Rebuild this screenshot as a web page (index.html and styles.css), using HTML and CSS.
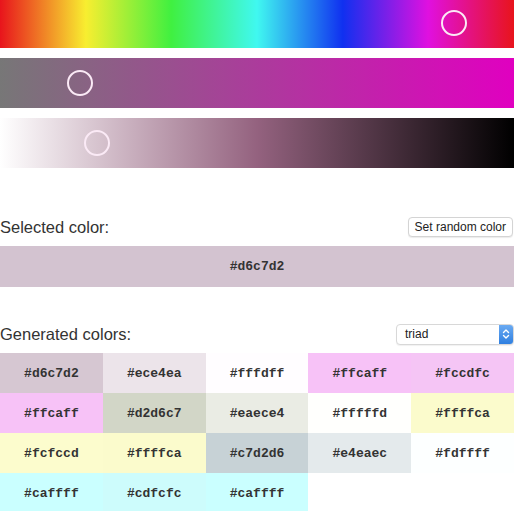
FILE: index.html
```html
<!DOCTYPE html>
<html lang="en">
<head>
    <meta charset="UTF-8">
    <meta name="viewport" content="width=device-width, initial-scale=1.0">
    <title>Color schemes</title>
    <link rel="stylesheet" href="styles.css">
</head>
<body>
    <div class="picker">
        <div class="slider hue"><span class="handle" style="left: 454px"></span></div>
        <div class="slider saturation"><span class="handle" style="left: 80px"></span></div>
        <div class="slider lightness"><span class="handle" style="left: 97px"></span></div>
    </div>

    <section class="selected">
        <div class="section-head">
            <h2>Selected color:</h2>
            <button class="button">Set random color</button>
        </div>
        <div class="current">#d6c7d2</div>
    </section>

    <section class="generated">
        <div class="section-head">
            <h2>Generated colors:</h2>
            <div class="scheme-select">
                <span>triad</span>
                <span class="stepper">
                    <svg width="8" height="12" viewBox="0 0 8 12">
                        <path d="M1.5 4.5 L4 2 L6.5 4.5 M1.5 7.5 L4 10 L6.5 7.5" fill="none" stroke="#fff" stroke-width="1.4" stroke-linecap="round" stroke-linejoin="round"/>
                    </svg>
                </span>
            </div>
        </div>
        <div class="swatches">
            <div class="swatch" style="background: #d6c7d2">#d6c7d2</div>
            <div class="swatch" style="background: #ece4ea">#ece4ea</div>
            <div class="swatch" style="background: #fffdff">#fffdff</div>
            <div class="swatch" style="background: #f7c2f7">#ffcaff</div>
            <div class="swatch" style="background: #f5c5f5">#fccdfc</div>
            <div class="swatch" style="background: #f7c2f7">#ffcaff</div>
            <div class="swatch" style="background: #d2d6c7">#d2d6c7</div>
            <div class="swatch" style="background: #eaece4">#eaece4</div>
            <div class="swatch" style="background: #fffffd">#fffffd</div>
            <div class="swatch" style="background: #fbfbcc">#ffffca</div>
            <div class="swatch" style="background: #fcfccd">#fcfccd</div>
            <div class="swatch" style="background: #fbfbcc">#ffffca</div>
            <div class="swatch" style="background: #c7d2d6">#c7d2d6</div>
            <div class="swatch" style="background: #e4eaec">#e4eaec</div>
            <div class="swatch" style="background: #fdffff">#fdffff</div>
            <div class="swatch" style="background: #caffff">#caffff</div>
            <div class="swatch" style="background: #cdfcfc">#cdfcfc</div>
            <div class="swatch" style="background: #caffff">#caffff</div>
        </div>
    </section>
</body>
</html>
```

FILE: styles.css
```css
body {
    margin: 0;
    width: 514px;
    font-family: 'Liberation Sans', Arial, sans-serif;
    color: #333;
    background: #fff;
    overflow: hidden;
}

.picker {
    display: flex;
    flex-direction: column;
    gap: 10px;
    margin-top: -2px;
}

.slider {
    position: relative;
    height: 50px;
}

.hue {
    background: linear-gradient(to right, #e8141c, #f8ee30 16.7%, #40f040 33.3%, #40f8f0 50%, #1030f0 66.7%, #e010e0 83.3%, #e8141c);
}

.saturation {
    background: linear-gradient(to right, #777, #e000c0);
}

.lightness {
    background: linear-gradient(to right, #fff, #94627f 50%, #000);
}

.handle {
    position: absolute;
    top: 50%;
    width: 26px;
    height: 26px;
    box-sizing: border-box;
    border: 2px solid #fbeaf6;
    border-radius: 50%;
    transform: translate(-50%, -50%);
}

.selected {
    margin-top: 47px;
}

.generated {
    margin-top: 35px;
}

.section-head {
    display: flex;
    justify-content: space-between;
    align-items: center;
    height: 24px;
    margin-bottom: 7px;
}

.section-head h2 {
    margin: 0;
    font-size: 16.5px;
    font-weight: normal;
    color: #333;
}

.button {
    font-family: 'Liberation Sans', Arial, sans-serif;
    font-size: 12px;
    color: #222;
    background: #fff;
    border: 1px solid #d4d4d4;
    border-radius: 4px;
    padding: 2px 6px;
    margin-right: 1px;
    box-shadow: 0 1px 1px rgba(0, 0, 0, 0.08);
}

.current {
    height: 41px;
    display: flex;
    align-items: center;
    justify-content: center;
    background: #d3c3d0;
    font-family: 'Liberation Mono', 'Courier New', monospace;
    font-weight: bold;
    font-size: 13px;
    color: #333;
}

.scheme-select {
    display: flex;
    align-items: center;
    justify-content: space-between;
    width: 118px;
    height: 21px;
    box-sizing: border-box;
    padding-left: 8px;
    border: 1px solid #d8d8d8;
    border-radius: 4px;
    background: #fff;
    font-size: 12px;
    color: #222;
    box-shadow: 0 1px 1px rgba(0, 0, 0, 0.06);
}

.stepper {
    display: flex;
    align-items: center;
    justify-content: center;
    width: 14px;
    height: 19px;
    border-radius: 0 3px 3px 0;
    background: linear-gradient(#6aaaf2, #2f7fe0);
}

.swatches {
    display: grid;
    grid-template-columns: repeat(5, 1fr);
    grid-auto-rows: 40px;
}

.swatch {
    display: flex;
    align-items: center;
    justify-content: center;
    font-family: 'Liberation Mono', 'Courier New', monospace;
    font-weight: bold;
    font-size: 13px;
    color: #333;
}
```
